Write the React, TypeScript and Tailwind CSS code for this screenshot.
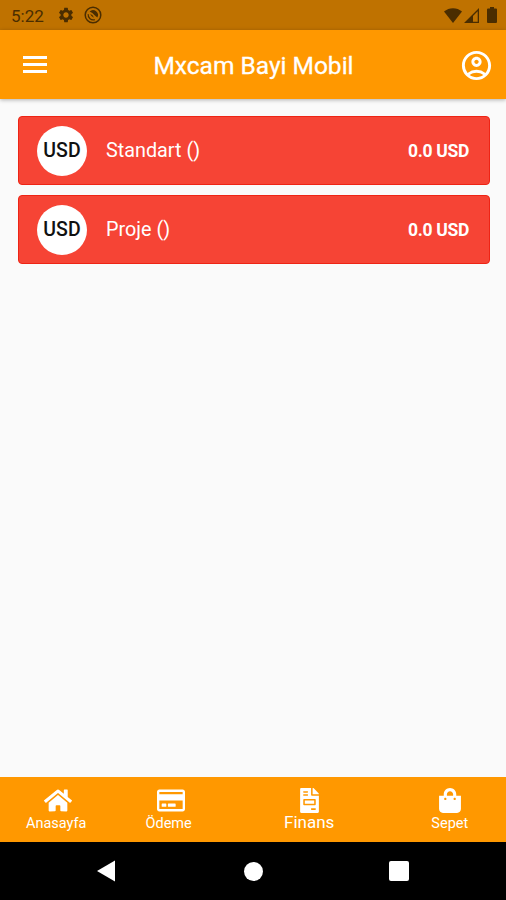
// src/App.tsx
import { FaFileInvoice, FaHome, FaRegCreditCard, FaShoppingBag } from 'react-icons/fa';
import { MdOutlineAccountCircle, MdSettings } from 'react-icons/md';

const accounts = [
  { currency: 'USD', name: 'Standart ()', balance: '0.0 USD' },
  { currency: 'USD', name: 'Proje ()', balance: '0.0 USD' },
];

const tabs = [
  { label: 'Anasayfa', icon: FaHome, cell: 'flex-[2]', iconSize: 'w-7 ml-1', text: 'text-[14.5px] leading-[22px]' },
  { label: 'Ödeme', icon: FaRegCreditCard, cell: 'flex-[2]', iconSize: 'w-7 ml-1', text: 'text-[14.5px] leading-[22px]' },
  { label: 'Finans', icon: FaFileInvoice, cell: 'flex-[3]', iconSize: 'w-[19px] ml-px', text: 'text-[17px] leading-[18px]' },
  { label: 'Sepet', icon: FaShoppingBag, cell: 'flex-[2]', iconSize: 'w-[22px]', text: 'text-[14.5px] leading-[22px]' },
];

function StatusBar() {
  return (
    <div className="h-[30px] shrink-0 bg-[#bf7200] flex items-center justify-between pl-[11px] pr-[9px] text-[#4a2d00]">
      <div className="flex items-center">
        <span className="w-[34px] pt-px text-[17px] leading-5 whitespace-nowrap">5:22</span>
        <MdSettings className="ml-3 size-[18px]" />
        {/* Screen capture indicator */}
        <svg viewBox="0 0 18 18" className="ml-[9px] size-[18px]" fill="none">
          <circle cx="9" cy="9" r="7.8" stroke="currentColor" strokeWidth="1.5" />
          <path d="M5.6 5.4A5 5 0 0 1 13.3 11.6L10.6 9.2Q8.6 6.6 5.6 5.4z" fill="currentColor" />
          <path d="M4.2 8.2a5 5 0 0 0 6.6 5.4" stroke="currentColor" strokeWidth="1.2" />
          <path d="M6.2 7.8Q9 8.6 10 11.8Q7.2 11.2 6.2 7.8z" fill="currentColor" />
        </svg>
      </div>
      <div className="flex items-center">
        <svg viewBox="0 0 18 15" className="w-[18px] h-[15px]" fill="currentColor">
          <path d="M0 3.5C5-1 13-1 18 3.5L9 15z" />
        </svg>
        <svg viewBox="0 0 15 15" className="ml-[2px] size-[15px]" fill="currentColor">
          <path fillRule="evenodd" d="M15 0v15H0zM13.7 3.2L9 7.9v5.8h4.7z" />
        </svg>
        <svg viewBox="0 0 10 16" className="ml-2 w-[10px] h-4" fill="currentColor">
          <path d="M3 0h4v1.5h2a1 1 0 0 1 1 1V15a1 1 0 0 1-1 1H1a1 1 0 0 1-1-1V2.5a1 1 0 0 1 1-1h2z" />
        </svg>
      </div>
    </div>
  );
}

export default function App() {
  return (
    <div className="w-[506px] h-[900px] flex flex-col overflow-hidden bg-[#fafafa] font-['Roboto',sans-serif]">
      <StatusBar />

      {/* App bar */}
      <header className="h-[69px] shrink-0 bg-[#ff9800] flex items-center justify-between pl-[23px] pr-[12px] pt-px text-white shadow-[0_1px_4px_rgba(0,0,0,0.3)]">
        <svg viewBox="0 0 24 17" className="w-6 h-[17px] mb-px" fill="currentColor">
          <path d="M0 0h24v3H0zM0 7h24v3H0zM0 14h24v3H0z" />
        </svg>
        <h1 className="text-[24.5px] font-normal leading-8 pt-[2px] pl-px [-webkit-text-stroke:0.3px_white]">Mxcam Bayi Mobil</h1>
        <MdOutlineAccountCircle className="size-[35px]" />
      </header>

      {/* Accounts */}
      <main className="flex-1 pt-[17px] pl-[18px] pr-4 flex flex-col gap-[10px]">
        {accounts.map((a) => (
          <div
            key={a.name}
            className="h-[69px] rounded bg-[#f64435] border border-[#ee2415] flex items-center pl-[18px] pr-5 text-white"
          >
            <div className="size-[50px] rounded-full bg-white text-[#111] text-[19.5px] font-medium flex items-center justify-center">
              {a.currency}
            </div>
            <span className="ml-[19px] text-[19.8px]">{a.name}</span>
            <span className="ml-auto pt-px text-[17.5px] tracking-[-0.3px] font-bold">{a.balance}</span>
          </div>
        ))}
      </main>

      {/* Bottom tabs */}
      <nav className="h-[65px] shrink-0 bg-[#ff9800] flex text-white">
        {tabs.map(({ label, icon: Icon, cell, iconSize, text }) => (
          <div key={label} className={`${cell} flex flex-col items-center pt-[11px]`}>
            <Icon className={`h-[25px] shrink-0 ${iconSize}`} />
            <span className={text}>{label}</span>
          </div>
        ))}
      </nav>

      {/* Android navigation */}
      <div className="h-[58px] shrink-0 bg-black flex items-center justify-between pl-[97px] pr-[97px]">
        <svg viewBox="0 0 18 22" className="w-[18px] h-[22px]" fill="white">
          <path d="M18 .5v21L0 11z" />
        </svg>
        <div className="ml-[2px] size-[19px] rounded-full bg-white" />
        <div className="size-5 rounded-[2px] bg-white" />
      </div>
    </div>
  );
}
